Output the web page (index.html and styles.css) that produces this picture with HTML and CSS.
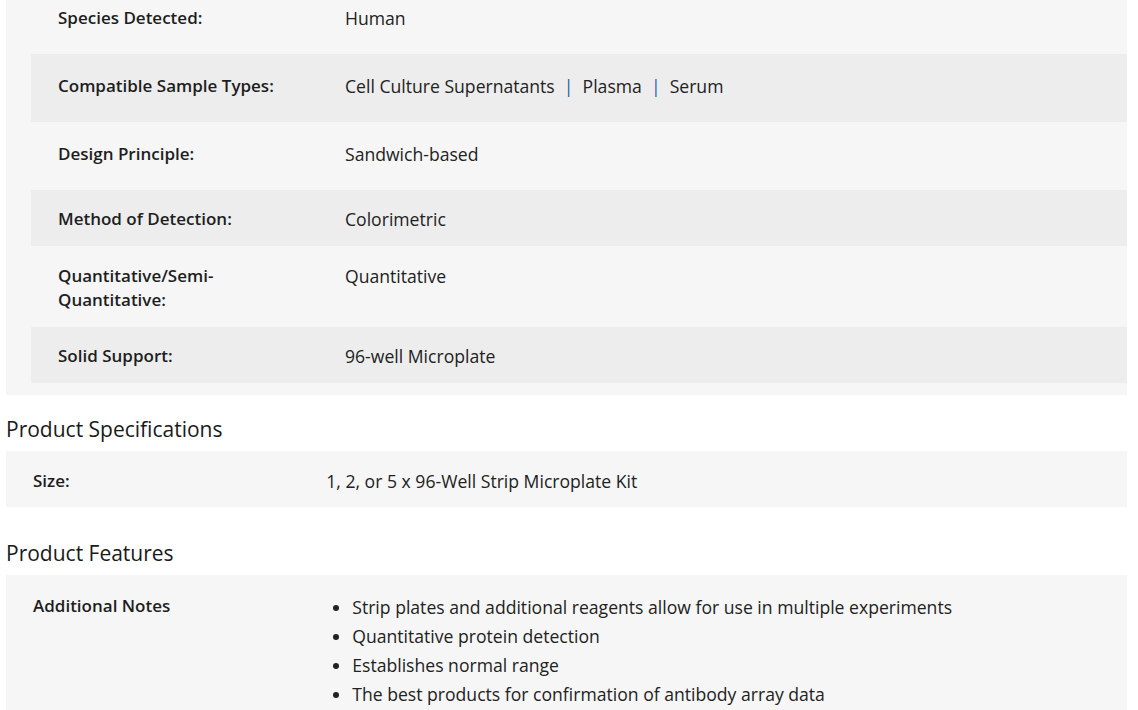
FILE: index.html
```html
<!DOCTYPE html>
<html>
<head>
<meta charset="utf-8">
<link rel="stylesheet" href="styles.css">
</head>
<body>
<div class="page">
  <section class="panel attrs">
    <div class="row tall">
      <div class="label">Species Detected:</div>
      <div class="value">Human</div>
    </div>
    <div class="row alt tall">
      <div class="label">Compatible Sample Types:</div>
      <div class="value">Cell Culture Supernatants <span class="sep">|</span> Plasma <span class="sep">|</span> Serum</div>
    </div>
    <div class="row tall">
      <div class="label">Design Principle:</div>
      <div class="value">Sandwich-based</div>
    </div>
    <div class="row alt">
      <div class="label">Method of Detection:</div>
      <div class="value">Colorimetric</div>
    </div>
    <div class="row double">
      <div class="label">Quantitative/Semi-<br>Quantitative:</div>
      <div class="value">Quantitative</div>
    </div>
    <div class="row alt">
      <div class="label">Solid Support:</div>
      <div class="value">96-well Microplate</div>
    </div>
  </section>

  <h2 class="heading">Product Specifications</h2>
  <section class="panel spec">
    <div class="row size">
      <div class="label">Size:</div>
      <div class="value">1, 2, or 5 x 96-Well Strip Microplate Kit</div>
    </div>
  </section>

  <h2 class="heading">Product Features</h2>
  <section class="panel">
    <div class="row features">
      <div class="label">Additional Notes</div>
      <div class="value">
        <ul class="notes">
          <li>Strip plates and additional reagents allow for use in multiple experiments</li>
          <li>Quantitative protein detection</li>
          <li>Establishes normal range</li>
          <li>The best products for confirmation of antibody array data</li>
        </ul>
      </div>
    </div>
  </section>
</div>
</body>
</html>
```

FILE: styles.css
```css
html, body {
  margin: 0;
  padding: 0;
  background: #ffffff;
}

body {
  font-family: "Open Sans", "Noto Sans", Arial, sans-serif;
  font-size: 17.6px;
  line-height: 24px;
  color: #222222;
}

.page {
  padding: 0 11px 0 6px;
}

.panel {
  background: #f6f6f6;
}

.panel.spec {
  margin-bottom: 33px;
}

.attrs {
  margin-top: -14px;
  padding: 0 0 12px 25px;
}

.row {
  display: grid;
  grid-template-columns: 25% 1fr;
  padding: 17px 0 15px;
}

.row.tall {
  padding: 20px 0 24px;
}

.row.double {
  padding: 18px 0 15px;
}

.row.size {
  padding: 18px 0 14px;
}

.row.features {
  padding: 19px 0 13px;
}

.row.alt {
  background: #ededed;
}

.label {
  padding-left: 27px;
  font-size: 17px;
  font-weight: 600;
  color: #1e1e1e;
}

.value {
  padding-left: 40px;
  color: #222222;
}

.sep {
  color: #1f5ea8;
  margin: 0 4.5px;
}

.heading {
  margin: 21px 0 9px;
  font-size: 21px;
  line-height: 26px;
  font-weight: 500;
  color: #1a1a1a;
}

.notes {
  margin: 1px 0 0;
  padding-left: 26px;
}

.notes li {
  margin-bottom: 5px;
}
```
